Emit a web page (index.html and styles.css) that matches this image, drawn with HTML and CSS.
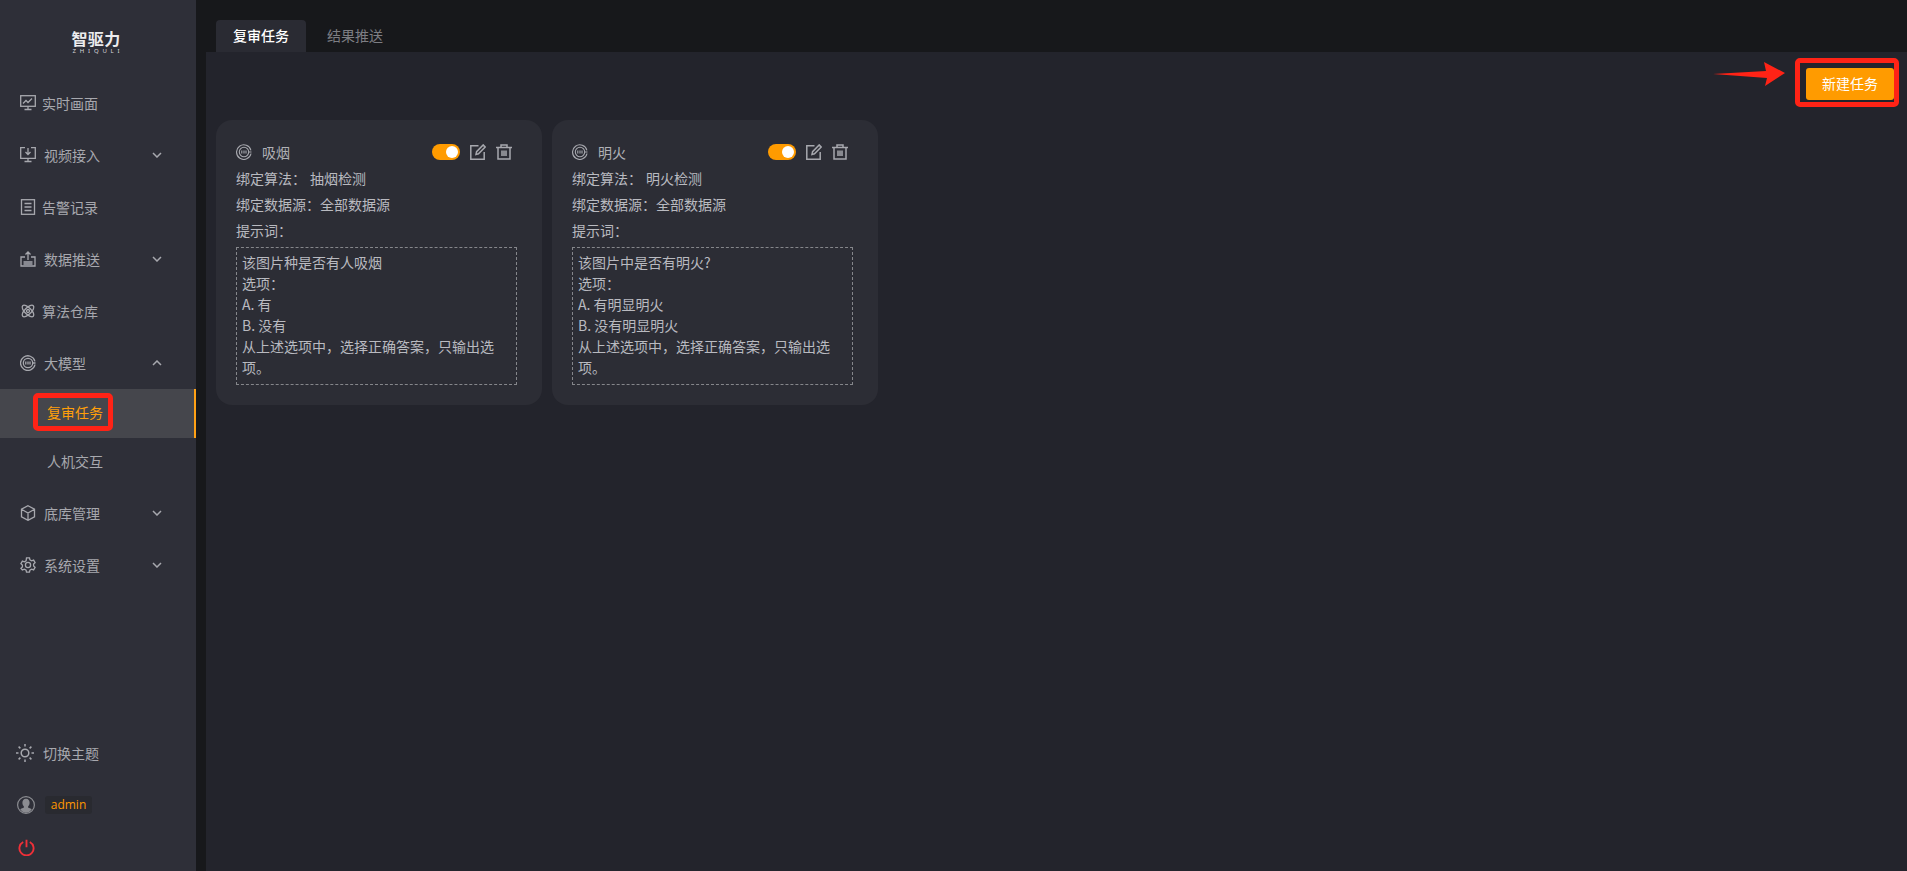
FILE: index.html
```html
<!DOCTYPE html>
<html lang="zh-CN">
<head>
<meta charset="utf-8">
<title>复审任务</title>
<link rel="stylesheet" href="styles.css">
</head>
<body>
<div class="app">
  <aside class="sidebar">
    <div class="logo">
      <div class="logo-cn">智驱力</div>
      <div class="logo-en">ZHIQULI</div>
    </div>
    <nav class="menu">
      <div class="item">
        <svg class="ico" viewBox="0 0 16 16"><rect x="0.7" y="0.7" width="14.6" height="10.6"/><path d="M3 8.500l3-3 2 2 4-4M4.500 14.500h7M8 11.500v3"/></svg>
        <span class="label">实时画面</span>
      </div>
      <div class="item">
        <svg class="ico" viewBox="0 0 16 16"><path d="M5 .7H.7v10.600h14.600V.7H11M8 1v6M5.500 5L8 7.500 10.500 5M4.500 14.500h7M8 11.500v3"/></svg>
        <span class="label wide">视频接入</span>
        <svg class="chev" viewBox="0 0 10 6"><path d="M1 1l4 4 4-4"/></svg>
      </div>
      <div class="item">
        <svg class="ico" viewBox="0 0 16 16"><rect x="1.500" y="0.7" width="13" height="14.600"/><path d="M4.500 4.500h7M4.500 8h7M4.500 11.500h7"/></svg>
        <span class="label">告警记录</span>
      </div>
      <div class="item">
        <svg class="ico" viewBox="0 0 16 16"><path d="M8 9V1M5.500 3.500L8 1l2.500 2.500M5 6H1v9h14V6h-4M3.500 11h9M3.500 13h9"/></svg>
        <span class="label wide">数据推送</span>
        <svg class="chev" viewBox="0 0 10 6"><path d="M1 1l4 4 4-4"/></svg>
      </div>
      <div class="item">
        <svg class="ico" viewBox="0 0 16 16"><ellipse cx="8" cy="8" rx="7.500" ry="3.300" transform="rotate(45 8 8)"/><ellipse cx="8" cy="8" rx="7.500" ry="3.300" transform="rotate(-45 8 8)"/><circle cx="8" cy="8" r="1.500"/></svg>
        <span class="label">算法仓库</span>
      </div>
      <div class="item">
        <svg class="ico" viewBox="0 0 16 16"><path d="M14.900 6.300A7.300 7.300 0 1 0 15 9.500"/><circle cx="8" cy="8" r="4.700"/><path d="M5.800 6.500v3M8 6.500v3M10 6.500v3M12.500 8h3"/></svg>
        <span class="label wide">大模型</span>
        <svg class="chev" viewBox="0 0 10 6"><path d="M1 5l4-4 4 4"/></svg>
      </div>
      <div class="sub active">复审任务</div>
      <div class="sub">人机交互</div>
      <div class="item">
        <svg class="ico" viewBox="0 0 16 16"><path d="M8 .7l6.500 3.500v7.600L8 15.300l-6.500-3.500V4.200zM1.500 4.200L8 8l6.500-3.800M8 8v7.300"/></svg>
        <span class="label wide">底库管理</span>
        <svg class="chev" viewBox="0 0 10 6"><path d="M1 1l4 4 4-4"/></svg>
      </div>
      <div class="item">
        <svg class="ico" viewBox="0 0 16 16"><circle cx="8" cy="8" r="2.600"/><path d="M6.500.8h3l.4 2 1.700 1 2-.7 1.500 2.600-1.500 1.400v1.800l1.500 1.400-1.500 2.600-2-.7-1.700 1-.4 2h-3l-.4-2-1.700-1-2 .7L.9 11.300l1.500-1.400V8.100L.9 6.700l1.500-2.600 2 .7 1.700-1z"/></svg>
        <span class="label wide">系统设置</span>
        <svg class="chev" viewBox="0 0 10 6"><path d="M1 1l4 4 4-4"/></svg>
      </div>
    </nav>
    <div class="foot">
      <div class="foot-row">
        <svg class="sun" viewBox="0 0 18 18"><circle cx="9" cy="9" r="3.800"/><path d="M9 0v2.500M9 15.500V18M0 9h2.500M15.500 9H18M2.600 2.600l1.800 1.800M13.600 13.600l1.800 1.800M2.600 15.400l1.800-1.800M13.600 4.400l1.800-1.800"/></svg>
        <span class="theme">切换主题</span>
      </div>
      <div class="foot-row">
        <svg class="avatar" viewBox="0 0 18 18"><circle class="ring" cx="9" cy="9" r="8.400"/><path class="bust" d="M9 2.800c2.500 0 3.600 1.900 3.600 4 0 1.600-.8 3-1.500 3.700v1.100c1 .6 2.800 1 3.700 2A7.500 7.500 0 0 1 9 16.800a7.500 7.500 0 0 1-5.800-3.200c.9-1 2.700-1.400 3.700-2v-1.100C6.200 9.800 5.400 8.400 5.400 6.800c0-2.100 1.100-4 3.600-4z"/></svg>
        <span class="user">admin</span>
      </div>
      <div class="power-row">
        <svg class="power" viewBox="0 0 18 18"><path d="M5.500 3.200a7.500 7.500 0 1 0 7 0M9 .8v8"/></svg>
      </div>
    </div>
  </aside>

  <main class="content">
    <div class="tabs">
      <div class="tab on">复审任务</div>
      <div class="tab">结果推送</div>
    </div>
    <section class="panel">
      <div class="toolbar"><button class="btn">新建任务</button></div>
      <div class="cards">
        <article class="card">
          <header class="card-head">
            <svg class="target" viewBox="0 0 16 16"><path d="M14.900 6.300A7.300 7.300 0 1 0 15 9.500"/><circle cx="8" cy="8" r="4.700"/><path d="M5.800 6.500v3M8 6.500v3M10 6.500v3M12.500 8h3"/></svg>
            <span class="card-name">吸烟</span>
            <span class="switch"><span class="knob"></span></span>
            <svg class="act" viewBox="0 0 16 16"><path d="M8.500 1.800H.8v13.400h13.400V8M6 10.500l.6-2.800L13.200.9l2 2-6.700 6.900z"/></svg>
            <svg class="act trash" viewBox="0 0 16 16"><path d="M0 3.500h16M5 3.500V1h6v2.500M2 3.500V15h12V3.500M6 6.500v5.500M8 6.500v5.500M10 6.500v5.500"/></svg>
          </header>
          <div class="line"><span class="k1">绑定算法：</span>抽烟检测</div>
          <div class="line">绑定数据源：全部数据源</div>
          <div class="line">提示词：</div>
          <div class="prompt">该图片种是否有人吸烟
选项：
A. 有
B. 没有
从上述选项中，选择正确答案，只输出选项。</div>
        </article>
        <article class="card">
          <header class="card-head">
            <svg class="target" viewBox="0 0 16 16"><path d="M14.900 6.300A7.300 7.300 0 1 0 15 9.500"/><circle cx="8" cy="8" r="4.700"/><path d="M5.800 6.500v3M8 6.500v3M10 6.500v3M12.500 8h3"/></svg>
            <span class="card-name">明火</span>
            <span class="switch"><span class="knob"></span></span>
            <svg class="act" viewBox="0 0 16 16"><path d="M8.500 1.800H.8v13.400h13.400V8M6 10.500l.6-2.800L13.200.9l2 2-6.700 6.900z"/></svg>
            <svg class="act trash" viewBox="0 0 16 16"><path d="M0 3.500h16M5 3.500V1h6v2.500M2 3.500V15h12V3.500M6 6.500v5.500M8 6.500v5.500M10 6.500v5.500"/></svg>
          </header>
          <div class="line"><span class="k1">绑定算法：</span>明火检测</div>
          <div class="line">绑定数据源：全部数据源</div>
          <div class="line">提示词：</div>
          <div class="prompt">该图片中是否有明火?
选项：
A. 有明显明火
B. 没有明显明火
从上述选项中，选择正确答案，只输出选项。</div>
        </article>
      </div>
    </section>
  </main>
</div>
<div class="mark mark-nav"></div>
<div class="mark mark-btn"></div>
<svg class="arrow" viewBox="0 0 72 24"><polygon points="0,12 53,9 51,0 72,11 52,24 54,16"/></svg>
</body>
</html>
```
FILE: styles.css
```css
* { box-sizing: border-box; }
html, body { margin: 0; height: 100%; overflow: hidden; }
body {
  font-family: "Noto Sans CJK SC", "Noto Sans", sans-serif;
  font-size: 14px;
  background: #17181b;
  color: #b9bac0;
}
.app { display: flex; height: 871px; }

.sidebar {
  width: 196px;
  flex: none;
  background: #2e2f38;
  display: flex;
  flex-direction: column;
}
.logo {
  height: 77px;
  padding: 30px 4px 0 0;
  display: flex;
  flex-direction: column;
  align-items: center;
  color: #ececee;
}
.logo-cn { font-size: 16px; font-weight: 700; line-height: 16px; letter-spacing: .3px; }
.logo-en {
  font-family: "Noto Sans", sans-serif;
  font-size: 6px;
  line-height: 6px;
  letter-spacing: 3.800px;
  margin: 2px -4px 0 0;
  color: #d8d8dc;
}

.item {
  height: 52px;
  display: flex;
  align-items: center;
  padding-left: 20px;
  color: #a7a8ae;
}
.ico {
  width: 16px;
  height: 16px;
  flex: none;
  fill: none;
  stroke: #a7a8ae;
  stroke-width: 1.300;
}
.label { margin-left: 6px; }
.label.wide { margin-left: 8px; }
.chev {
  width: 10px;
  height: 6px;
  margin-left: auto;
  margin-right: 34px;
  fill: none;
  stroke: #a7a8ae;
  stroke-width: 1.500;
}
.sub {
  height: 49px;
  display: flex;
  align-items: center;
  padding: 0 0 3px 47px;
  color: #a7a8ae;
}
.sub.active {
  background: #45464c;
  border-right: 2px solid #ffa115;
  color: #ff9f0a;
}

.foot { margin-top: auto; padding-bottom: 8px; }
.foot-row { height: 52px; display: flex; align-items: center; padding-left: 16px; }
.sun { width: 18px; height: 18px; fill: none; stroke: #a7a8ae; stroke-width: 1.500; }
.theme { margin-left: 9px; color: #a7a8ae; }
.avatar { width: 18px; height: 18px; margin-left: 1px; }
.ring { fill: none; stroke: #8b8c91; stroke-width: 1.200; }
.bust { fill: #8b8c91; }
.user {
  width: 47px;
  margin-left: 10px;
  height: 18px;
  line-height: 18px;
  text-align: center;
  font-size: 12px;
  font-family: "Open Sans", sans-serif;
  color: #ff9800;
  background: #292a30;
  border-radius: 3px;
}
.power-row { height: 32px; display: flex; align-items: center; padding-left: 18px; }
.power { width: 17px; height: 17px; fill: none; stroke: #f03038; stroke-width: 2; }

.content { flex: 1; min-width: 0; display: flex; flex-direction: column; }
.tabs { height: 52px; flex: none; display: flex; align-items: flex-end; padding-left: 20px; gap: 4px; }
.tab {
  width: 90px;
  height: 32px;
  display: flex;
  align-items: center;
  justify-content: center;
  padding-bottom: 2px;
  color: #7d7e83;
  border-radius: 4px 4px 0 0;
}
.tab.on { background: #2a2b33; color: #fff; font-weight: 500; }

.panel { flex: 1; margin-left: 10px; background: #23242c; padding: 16px 13px 0 10px; }
.toolbar { display: flex; justify-content: flex-end; height: 32px; }
.btn {
  width: 88px;
  height: 32px;
  border: 0;
  border-radius: 3px;
  background: #ff9b00;
  color: #fff;
  font: inherit;
  padding: 0 0 2px;
}
.cards { display: flex; gap: 10px; margin-top: 20px; }
.card {
  width: 326px;
  height: 285px;
  background: #2c2d35;
  border-radius: 16px;
  padding: 19px 25px 20px 20px;
}
.card-head { display: flex; align-items: center; height: 26px; }
.target { width: 16px; height: 16px; fill: none; stroke: #a7a8ae; stroke-width: 1.100; }
.card-name { margin-left: 10px; color: #b0b1b6; }
.switch {
  margin-left: auto;
  width: 28px;
  height: 16px;
  border-radius: 8px;
  background: #ff9b00;
  display: flex;
  align-items: center;
  justify-content: flex-end;
  padding-right: 2px;
}
.knob { width: 12px; height: 12px; border-radius: 50%; background: #fff; }
.act { width: 16px; height: 16px; margin-left: 10px; fill: none; stroke: #a7a8ae; stroke-width: 1.500; }
.trash { margin-right: 5px; }
.line { height: 26px; line-height: 26px; color: #b9bac0; }
.k1 { margin-right: 4px; }
.prompt {
  margin-top: 4px;
  width: 281px;
  height: 138px;
  border: 1px dashed #85868b;
  padding: 4px 5px 6px;
  line-height: 21px;
  white-space: pre-wrap;
  color: #b9bac0;
}

.mark { position: absolute; border: 5px solid #ff2316; border-radius: 5px; }
.mark-nav { left: 33px; top: 393px; width: 80px; height: 38px; }
.mark-btn { left: 1795px; top: 58px; width: 104px; height: 49px; }
.arrow { position: absolute; left: 1713px; top: 62px; width: 72px; height: 24px; fill: #ff2316; }
```
